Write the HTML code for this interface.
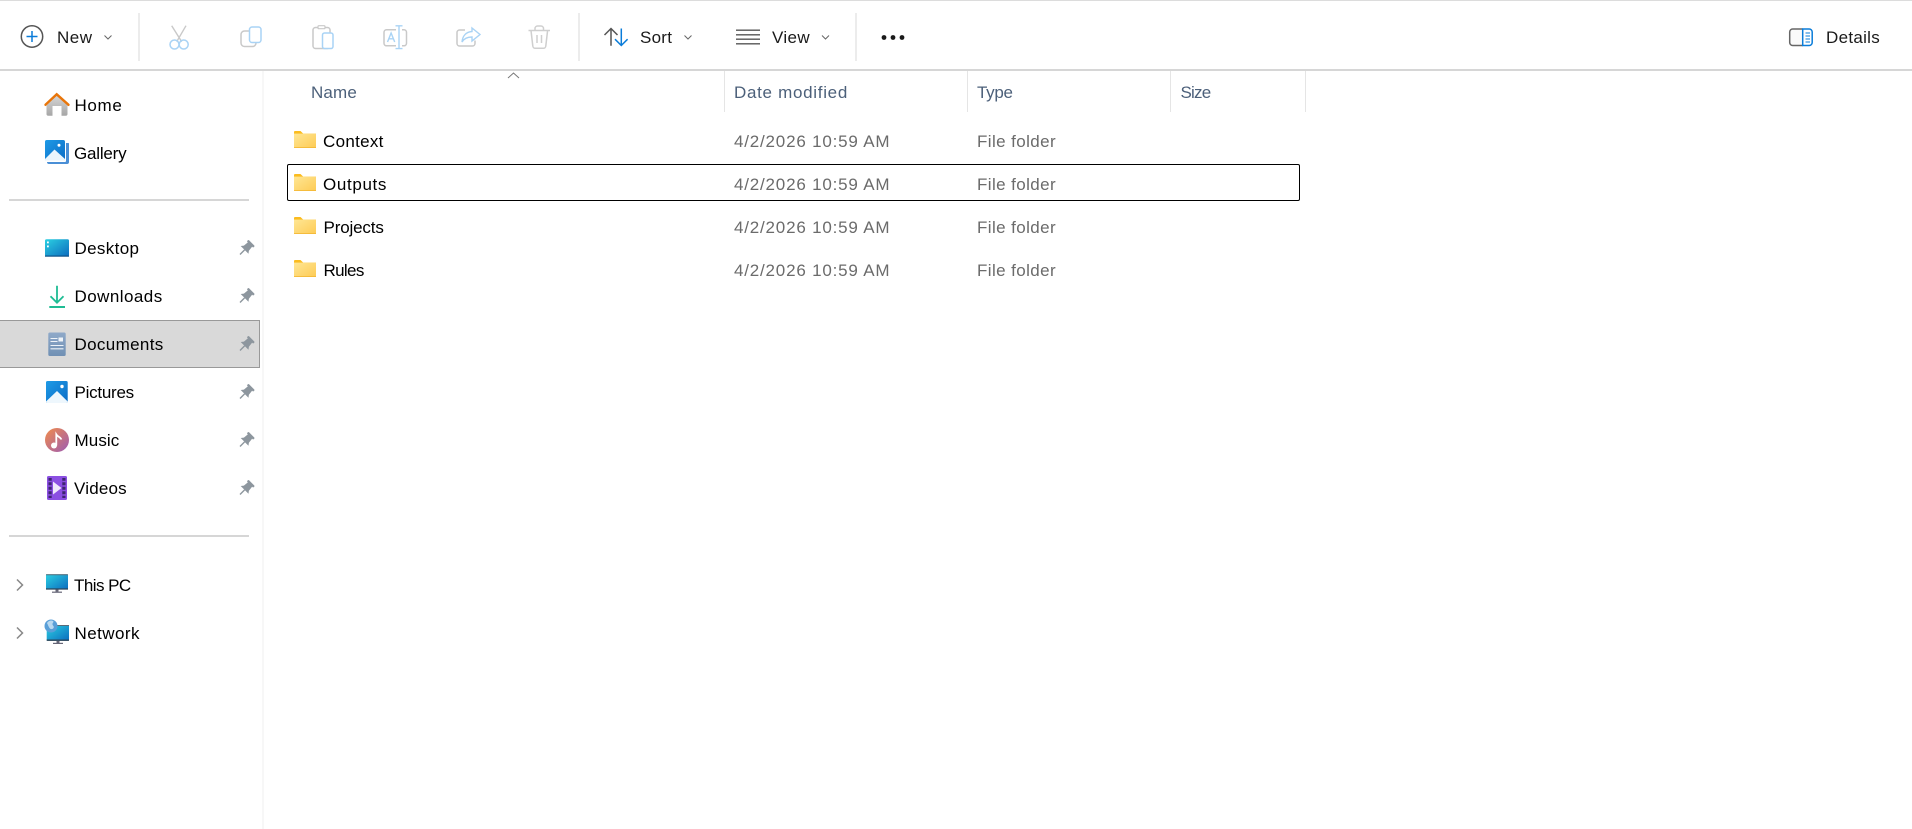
<!DOCTYPE html>
<html><head><meta charset="utf-8"><title>Documents</title>
<style>
html,body{margin:0;padding:0;width:1912px;height:829px;overflow:hidden;background:#fff}
body{font-family:"Liberation Sans",sans-serif;font-size:17px;color:#000;position:relative}
.t{position:absolute;line-height:24px;height:24px;white-space:nowrap}
.b{position:absolute}
.h{color:#4c607a}
.d{color:#6b6b6b;letter-spacing:.8px}
.f{color:#6b6b6b;letter-spacing:.4px}
.c{color:#1a1a1a}
svg{position:absolute;left:0;top:0}
</style></head><body>
<div class="b" style="left:0;top:0;width:1912px;height:1px;background:#dcdcdc"></div>
<div class="b" style="left:0;top:69px;width:1912px;height:2px;background:#d6d6d6"></div>
<div class="b" style="left:138px;top:13px;width:2px;height:48px;background:#ececec"></div>
<div class="b" style="left:578px;top:13px;width:2px;height:48px;background:#ececec"></div>
<div class="b" style="left:855px;top:13px;width:2px;height:48px;background:#ececec"></div>
<div class="b" style="left:262px;top:71px;width:2px;height:758px;background:#f7f7f7"></div>
<div class="b" style="left:9px;top:199px;width:240px;height:2px;background:#d6d6d6"></div>
<div class="b" style="left:9px;top:535px;width:240px;height:2px;background:#d6d6d6"></div>
<div class="b" style="left:-1px;top:320px;width:259px;height:46px;background:#d9d9d9;border:1px solid #999"></div>
<div class="b" style="left:724px;top:71px;width:1px;height:41px;background:#e5e5e5"></div>
<div class="b" style="left:967px;top:71px;width:1px;height:41px;background:#e5e5e5"></div>
<div class="b" style="left:1170px;top:71px;width:1px;height:41px;background:#e5e5e5"></div>
<div class="b" style="left:1305px;top:71px;width:1px;height:41px;background:#e5e5e5"></div>
<div class="b" style="left:287px;top:164px;width:1011px;height:35px;border:1px solid #000;border-radius:2px"></div>

<svg width="1912" height="829" viewBox="0 0 1912 829" fill="none">
<defs>
<linearGradient id="fg" x1="0" y1="0" x2="1" y2="1"><stop offset="0" stop-color="#ffe694"/><stop offset="1" stop-color="#fdcb55"/></linearGradient>
<linearGradient id="hg" x1="0" y1="0" x2="0" y2="1"><stop offset="0" stop-color="#d6d6d6"/><stop offset="1" stop-color="#a6a6a6"/></linearGradient>
<linearGradient id="bg" x1="0" y1="0" x2="1" y2="1"><stop offset="0" stop-color="#1e9ae6"/><stop offset="1" stop-color="#0b6cc6"/></linearGradient>
<linearGradient id="cy" x1="0" y1="0" x2="1" y2="1"><stop offset="0" stop-color="#2bd0e2"/><stop offset="1" stop-color="#0c6cbe"/></linearGradient>
<linearGradient id="dg" x1="0" y1="0" x2="0" y2="1"><stop offset="0" stop-color="#8fa9c9"/><stop offset="1" stop-color="#7090b4"/></linearGradient>
<linearGradient id="mg" x1="0" y1="0" x2="1" y2="1"><stop offset="0" stop-color="#f28c4a"/><stop offset="1" stop-color="#9c5cb4"/></linearGradient>
<g id="folder">
<path d="M294 132a1 1 0 0 1 1-1h5.500l2.700 2.600H316V136H294z" fill="#fbbc1f"/>
<rect x="294" y="133.600" width="22" height="14.400" fill="url(#fg)"/>
<rect x="294" y="147.200" width="22" height=".8" fill="#f3b632"/>
</g>
<g id="pin"><g transform="translate(8 8) rotate(45)" fill="#8d969e">
<rect x="-4.500" y="-8" width="9" height="2.400" rx=".8"/>
<path d="M-3-6h6l.6 5.500L5.500 2H-5.500l2-2.500z"/>
<rect x="-.7" y="2" width="1.400" height="6.500"/>
</g></g>
</defs>

<!-- New -->
<circle cx="32" cy="36.500" r="10.700" stroke="#555" stroke-width="1.500"/>
<path d="M26.500 36.500h11M32 31v11" stroke="#0a7cd9" stroke-width="1.500"/>
<path d="M104.500 35.500l3.500 3.500 3.500-3.500" stroke="#666"/>
<!-- Cut -->
<path d="M171.700 25.700l10 16M186 25.700l-9.300 16" stroke="#c9c9c9" stroke-width="1.400"/>
<circle cx="174.500" cy="44.500" r="4.500" stroke="#a9d3f5" stroke-width="1.500"/>
<circle cx="183.700" cy="44.500" r="4.500" stroke="#a9d3f5" stroke-width="1.500"/>
<!-- Copy -->
<rect x="241" y="31" width="15" height="15.500" rx="3.500" stroke="#c9c9c9" stroke-width="1.500"/>
<rect x="249.500" y="27" width="11.500" height="15.500" rx="2.500" fill="#fff" stroke="#a9d3f5" stroke-width="1.500"/>
<!-- Paste -->
<rect x="313" y="27.500" width="17" height="21" rx="2.500" stroke="#c9c9c9" stroke-width="1.500"/>
<rect x="318" y="25.700" width="7" height="3" rx="1" fill="#fff" stroke="#c9c9c9" stroke-width="1.200"/>
<rect x="322.500" y="33" width="10.500" height="15.500" rx="2" fill="#fff" stroke="#a9d3f5" stroke-width="1.500"/>
<!-- Rename -->
<path d="M396 29.800h-9.500a2.500 2.500 0 0 0-2.500 2.500v11a2.500 2.500 0 0 0 2.500 2.500h9.500M402 29.800h2a2.500 2.500 0 0 1 2.500 2.500v11a2.500 2.500 0 0 1-2.500 2.500h-2" stroke="#c9c9c9" stroke-width="1.500"/>
<path d="M387.500 42l3.600-9 3.600 9M389 38.800h4.300M399 26v22.600M395.500 25.800h7M395.500 48.600h7" stroke="#a9d3f5" stroke-width="1.400"/>
<!-- Share -->
<path d="M465 30h-5.500a2.500 2.500 0 0 0-2.500 2.500v11a2.500 2.500 0 0 0 2.500 2.500h13a2.500 2.500 0 0 0 2.500-2.500v-3" stroke="#c9c9c9" stroke-width="1.500"/>
<path d="M472 28l8 6.500-8 6.500v-4c-5 0-8 1.500-10 5 .5-6 4-10 10-10.500z" stroke="#a9d3f5" stroke-width="1.400" fill="#fff"/>
<!-- Delete -->
<path d="M528.500 30.500h21.500M535 30.500v-2a2.500 2.500 0 0 1 2.500-2.500h3.500a2.500 2.500 0 0 1 2.500 2.500v2M531 30.500l1.800 15.500a2.500 2.500 0 0 0 2.500 2.300h8a2.500 2.500 0 0 0 2.500-2.300l1.800-15.500M537 35v8M541.500 35v8" stroke="#cfcfcf" stroke-width="1.500"/>
<!-- Sort -->
<path d="M611 45.700V28.500M604.500 35l6.500-6.500 6.500 6.500" stroke="#555" stroke-width="1.500"/>
<path d="M621.300 28.500v17M615 39.200l6.300 6.300 6.300-6.300" stroke="#0a7cd9" stroke-width="1.500"/>
<path d="M684.500 35.500l3.500 3.500 3.500-3.500M822 35.500l3.500 3.500 3.500-3.500" stroke="#666"/>
<!-- View -->
<path d="M736 30.200h24M736 34.800h24M736 39.200h24M736 43.800h24" stroke="#555" stroke-width="1.300"/>
<!-- More -->
<circle cx="884" cy="37.500" r="2.400" fill="#1a1a1a"/><circle cx="893" cy="37.500" r="2.400" fill="#1a1a1a"/><circle cx="902" cy="37.500" r="2.400" fill="#1a1a1a"/>
<!-- Details -->
<path d="M1802.700 29h-10a3 3 0 0 0-3 3v10.500a3 3 0 0 0 3 3h10" stroke="#666" stroke-width="1.500" fill="#fafafa"/>
<path d="M1802.700 29h6.500a3 3 0 0 1 3 3v10.500a3 3 0 0 1-3 3h-6.500z" stroke="#0a7cd9" stroke-width="1.500" fill="#fff"/>
<path d="M1805.500 33h4.500M1805.500 36h4.500M1805.500 39h4.500M1805.500 42h4.500" stroke="#0a7cd9"/>
<!-- Sort caret -->
<path d="M508 78l5.500-5 5.500 5" stroke="#777"/>

<!-- Home -->
<path d="M46.500 105.500L56.700 95.500 67.500 105.500V114a1.700 1.700 0 0 1-1.700 1.700H61.500V106h-9v9.700H48.200a1.700 1.700 0 0 1-1.700-1.700z" fill="url(#hg)"/>
<path d="M45.500 104.800L56.700 94.300 68.500 104.800" stroke="#e8750a" stroke-width="2.400" stroke-linecap="round"/>
<!-- Gallery -->
<path d="M66 143h2.500a.6.6 0 0 1 .5.600V162a2 2 0 0 1-2 2H49a2 2 0 0 1-2-2h18a1 1 0 0 0 1-1z" fill="#4a8fd6"/>
<rect x="45" y="140" width="20" height="20.500" rx="1.800" fill="url(#bg)"/>
<path d="M45 159l9.500-9.500L65 159v.5a1 1 0 0 1-1 1H46a1 1 0 0 1-1-1z" fill="#eaf5fd"/>
<circle cx="59" cy="145.300" r="1.500" fill="#fff"/>
<!-- Desktop -->
<rect x="45" y="239.300" width="24" height="17" rx="1.500" fill="url(#cy)"/>
<rect x="45" y="255.500" width="24" height="1.200" fill="#0a4f86"/>
<rect x="47" y="241.500" width="1.800" height="1.800" fill="#fff"/><rect x="47" y="245.500" width="1.800" height="1.800" fill="#fff"/>
<!-- Downloads -->
<path d="M57 285.700v17M50.500 296.200l6.500 6.500 6.500-6.500" stroke="#1fbc94" stroke-width="1.800"/>
<rect x="49.300" y="306" width="15.700" height="2" fill="#1fbc94"/>
<!-- Documents -->
<rect x="48.300" y="332.500" width="17.400" height="23.500" rx="1.500" fill="url(#dg)"/>
<path d="M50.500 338.500h7M50.500 341.500h7M50.500 345.500h13M50.500 348.800h13" stroke="#eef3f8" stroke-width="1.100"/>
<rect x="58.500" y="337.500" width="4.500" height="4" fill="#eef3f8"/>
<!-- Pictures -->
<rect x="46" y="381" width="21.700" height="22" rx="1.500" fill="url(#bg)"/>
<path d="M46 401.500l11-10.500 10.700 10.500a1.500 1.500 0 0 1-1.500 1.500H47.500A1.500 1.500 0 0 1 46 401.500z" fill="#eef7fd"/>
<circle cx="62" cy="386.500" r="1.700" fill="#fff"/>
<!-- Music -->
<circle cx="57" cy="440" r="12" fill="url(#mg)"/>
<circle cx="54" cy="445.500" r="3" fill="#fff"/>
<path d="M56.300 445.500V434.500c1.500 2.500 4.500 2.500 5 5" stroke="#fff" stroke-width="1.800"/>
<!-- Videos -->
<rect x="47" y="476" width="20" height="24" rx="1.500" fill="#8b4fe2"/>
<rect x="48.500" y="478" width="3.200" height="20" fill="#3d2570"/><rect x="62.300" y="478" width="3.200" height="20" fill="#3d2570"/>
<path d="M48.500 481.500h3.200M48.500 486h3.200M48.500 490.500h3.200M48.500 495h3.200M62.300 481.500h3.200M62.300 486h3.200M62.300 490.500h3.200M62.300 495h3.200" stroke="#8b4fe2" stroke-width="1.500"/>
<path d="M53 481.500l8.500 6.500-8.500 6.500z" fill="#efe7fb"/>
<!-- This PC -->
<rect x="46" y="574.300" width="22" height="15" rx="1" fill="url(#cy)"/>
<path d="M46 574.800h22" stroke="#5a6b78"/><path d="M46 589h22" stroke="#2c4457" stroke-width="1.300"/>
<rect x="55.500" y="589.500" width="3" height="2.300" fill="#667"/><rect x="52" y="591.600" width="10" height="1.200" fill="#667"/>
<!-- Network -->
<rect x="46.700" y="625" width="22.300" height="15.700" rx="1" fill="url(#cy)"/>
<path d="M46.700 625.500h22.300" stroke="#5a6b78"/><path d="M46.700 640.200h22.300" stroke="#2c4457" stroke-width="1.300"/>
<rect x="56.500" y="641" width="3" height="2" fill="#667"/><rect x="53" y="642.800" width="10" height="1.200" fill="#667"/>
<circle cx="51" cy="626" r="6.500" fill="#5a9fd8"/>
<path d="M47 623c1.500-2.500 4.500-3 6-2s-1 2-.5 3.500 2 2 1 3.500-3 1.500-4 0-1.500-3-2.500-5z" fill="#b9d9f0"/>
<!-- Chevrons -->
<path d="M17 579.500l5.500 5.500-5.500 5.500M17 627.500l5.500 5.500-5.500 5.500" stroke="#888" stroke-width="1.500"/>
<!-- Pins -->
<use href="#pin" x="238" y="240.500"/><use href="#pin" x="238" y="288.500"/><use href="#pin" x="238" y="336.500"/><use href="#pin" x="238" y="384.500"/><use href="#pin" x="238" y="432.500"/><use href="#pin" x="238" y="480.500"/>
<!-- Folders -->
<use href="#folder"/><use href="#folder" y="43"/><use href="#folder" y="86"/><use href="#folder" y="129"/>
</svg>

<div class="t c" style="left:57px;top:26px;letter-spacing:.5px">New</div>
<div class="t c" style="left:640px;top:26px;letter-spacing:.25px">Sort</div>
<div class="t c" style="left:772px;top:26px;letter-spacing:.35px">View</div>
<div class="t c" style="left:1826px;top:26px;letter-spacing:.3px">Details</div>

<div class="t" style="left:74.500px;top:94px;letter-spacing:.65px">Home</div>
<div class="t" style="left:74px;top:142px;letter-spacing:-.2px">Gallery</div>
<div class="t" style="left:74.500px;top:237px;letter-spacing:.35px">Desktop</div>
<div class="t" style="left:74.500px;top:285px;letter-spacing:.45px">Downloads</div>
<div class="t" style="left:74.500px;top:333px;letter-spacing:.35px">Documents</div>
<div class="t" style="left:74.500px;top:381px;letter-spacing:-.25px">Pictures</div>
<div class="t" style="left:74.500px;top:429px;letter-spacing:.1px">Music</div>
<div class="t" style="left:74px;top:477px;letter-spacing:.2px">Videos</div>
<div class="t" style="left:74px;top:574px;letter-spacing:-.55px">This PC</div>
<div class="t" style="left:74.500px;top:622px;letter-spacing:.45px">Network</div>

<div class="t h" style="left:311px;top:81px;letter-spacing:.15px">Name</div>
<div class="t h" style="left:734px;top:81px;letter-spacing:.7px">Date modified</div>
<div class="t h" style="left:977px;top:81px;letter-spacing:-.3px">Type</div>
<div class="t h" style="left:1180.500px;top:81px;letter-spacing:-.8px">Size</div>

<div class="t" style="left:323px;top:130px;letter-spacing:.3px">Context</div>
<div class="t" style="left:323px;top:173px;letter-spacing:.65px">Outputs</div>
<div class="t" style="left:323.500px;top:216px;letter-spacing:-.15px">Projects</div>
<div class="t" style="left:323.500px;top:259px;letter-spacing:-.65px">Rules</div>

<div class="t d" style="left:734px;top:130px">4/2/2026 10:59 AM</div>
<div class="t d" style="left:734px;top:173px">4/2/2026 10:59 AM</div>
<div class="t d" style="left:734px;top:216px">4/2/2026 10:59 AM</div>
<div class="t d" style="left:734px;top:259px">4/2/2026 10:59 AM</div>
<div class="t f" style="left:977px;top:130px">File folder</div>
<div class="t f" style="left:977px;top:173px">File folder</div>
<div class="t f" style="left:977px;top:216px">File folder</div>
<div class="t f" style="left:977px;top:259px">File folder</div>
</body></html>
